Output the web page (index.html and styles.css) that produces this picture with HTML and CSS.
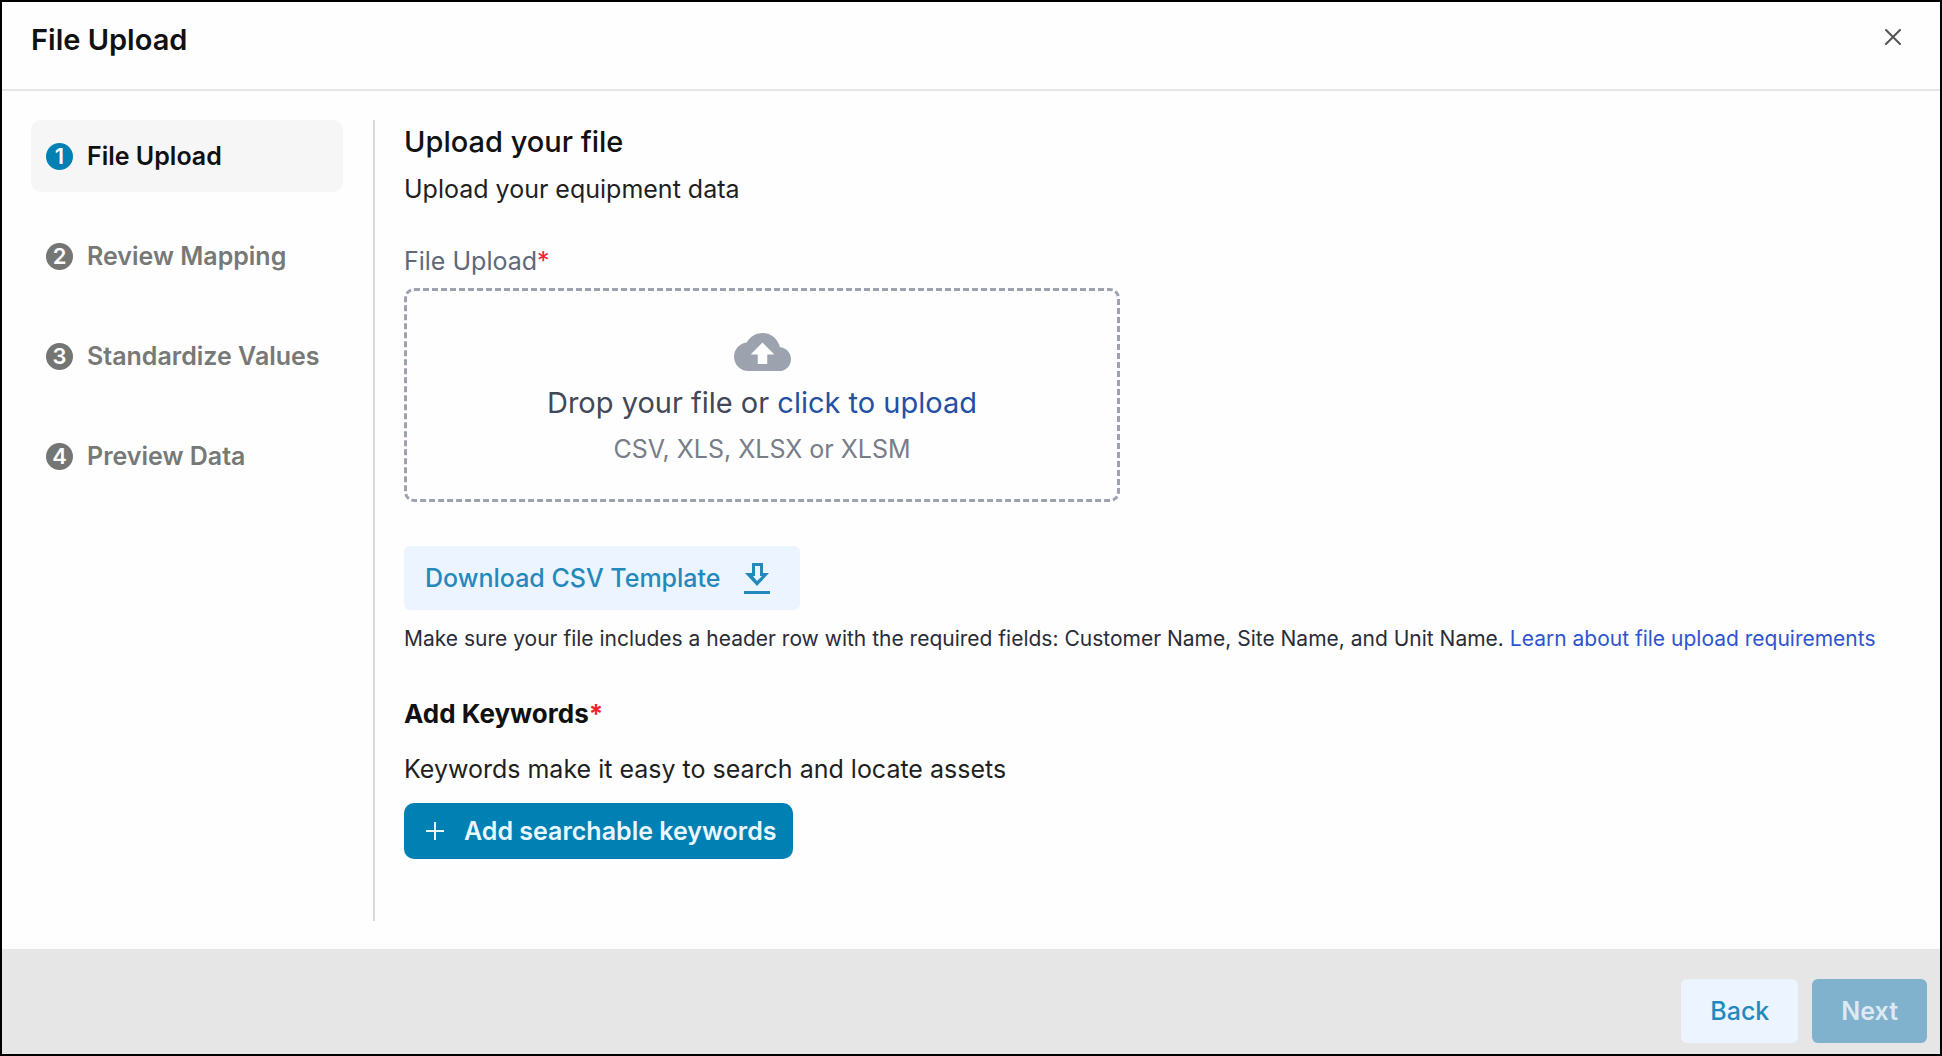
FILE: index.html
```html
<!DOCTYPE html>
<html lang="en">
<head>
    <meta charset="UTF-8">
    <meta name="viewport" content="width=device-width, initial-scale=1.0">
    <title>File Upload</title>
    <link rel="stylesheet" href="styles.css">
</head>
<body>
    <div class="modal">
        <header class="modal-header">
            <h1>File Upload</h1>
            <button type="button" class="close" aria-label="Close">
                <svg viewBox="0 0 16 16" width="16" height="16"><path d="M1 1l14 14M15 1L1 15" stroke="currentColor" stroke-width="2" stroke-linecap="round"/></svg>
            </button>
        </header>

        <div class="modal-body">
            <ol class="steps">
                <li class="step active"><span class="step-number">1</span>File Upload</li>
                <li class="step"><span class="step-number">2</span>Review Mapping</li>
                <li class="step"><span class="step-number">3</span>Standardize Values</li>
                <li class="step"><span class="step-number">4</span>Preview Data</li>
            </ol>

            <main class="content">
                <h2>Upload your file</h2>
                <p class="text">Upload your equipment data</p>

                <label class="field-label" for="file">File Upload<span class="required">*</span></label>
                <label class="dropzone">
                    <input type="file" id="file" class="file-input" accept=".csv,.xls,.xlsx,.xlsm">
                    <svg class="cloud" viewBox="0 4 24 16" width="57" height="38"><path fill="currentColor" d="M19.35 10.04C18.67 6.59 15.64 4 12 4 9.11 4 6.6 5.64 5.35 8.04 2.34 8.36 0 10.91 0 14c0 3.31 2.69 6 6 6h13c2.76 0 5-2.24 5-5 0-2.64-2.05-4.78-4.65-4.96zM14 13v4h-4v-4H7l5-5 5 5h-3z"/></svg>
                    <span class="drop-text">Drop your file or <span class="drop-link">click to upload</span></span>
                    <span class="drop-hint">CSV, XLS, XLSX or XLSM</span>
                </label>

                <button type="button" class="btn btn-light btn-download">
                    Download CSV Template
                    <svg viewBox="0 0 26 31" width="26" height="31"><path fill="currentColor" fill-rule="evenodd" d="M8 0h11v10h6L13 23 1 10h7zM11 3v10H9l4 5 5-5h-2V3z"/><path fill="currentColor" d="M0 28h26v3H0z"/></svg>
                </button>
                <p class="note">Make sure your file includes a header row with the required fields: Customer Name, Site Name, and Unit Name. <a href="#">Learn about file upload requirements</a></p>

                <h3>Add Keywords<span class="required">*</span></h3>
                <p class="text">Keywords make it easy to search and locate assets</p>
                <button type="button" class="btn btn-primary btn-keywords">
                    <svg viewBox="0 0 18 18" width="18" height="18"><path d="M9 0v18M0 9h18" stroke="currentColor" stroke-width="2"/></svg>
                    Add searchable keywords
                </button>
            </main>
        </div>

        <footer class="modal-footer">
            <button type="button" class="btn btn-light">Back</button>
            <button type="button" class="btn btn-primary" disabled>Next</button>
        </footer>
    </div>
</body>
</html>
```
FILE: styles.css
```css
* {
    margin: 0;
    padding: 0;
    box-sizing: border-box;
}

body {
    font-family: Inter, 'Liberation Sans', sans-serif;
    font-size: 25px;
    line-height: 32px;
    color: #1f1f1f;
    background: #fefefe;
}

button {
    font: inherit;
    border: none;
    cursor: pointer;
}

a {
    color: #2f54d0;
    text-decoration: none;
}

svg {
    display: block;
    fill: none;
}

.modal {
    display: flex;
    flex-direction: column;
    min-height: 100vh;
    border: 2px solid #000;
}

.modal-header {
    display: flex;
    justify-content: space-between;
    align-items: flex-start;
    padding: 20px 33px 31px 29px;
    border-bottom: 2px solid #e6e6e6;
}

h1 {
    font-size: 29px;
    line-height: 36px;
    font-weight: 600;
    color: #111;
}

.close {
    padding: 7px 6px;
    color: #555;
    background: none;
}

.modal-body {
    flex: 1;
    display: flex;
    gap: 29px;
    padding: 29px 29px 28px;
}

.steps {
    display: flex;
    flex-direction: column;
    gap: 28px;
    flex-shrink: 0;
    width: 344px;
    padding-right: 30px;
    border-right: 2px solid #d9d9d9;
    list-style: none;
}

.step {
    display: flex;
    align-items: center;
    gap: 14px;
    padding: 20px 15px;
    border-radius: 10px;
    font-weight: 600;
    color: #777977;
}

.step.active {
    color: #111;
    background: #f6f6f6;
}

.step-number {
    width: 27px;
    height: 27px;
    border-radius: 50%;
    background: #747673;
    color: #fff;
    font-size: 22px;
    line-height: 27px;
    text-align: center;
}

.active .step-number {
    background: #0080b3;
}

.content {
    flex: 1;
    display: flex;
    flex-direction: column;
    align-items: flex-start;
}

h2 {
    margin-top: 4px;
    margin-bottom: 13px;
    font-size: 29px;
    line-height: 36px;
    font-weight: 500;
    color: #111;
}

h3 {
    margin-top: 43px;
    margin-bottom: 23px;
    font-size: 26px;
    font-weight: 700;
    color: #111;
}

.field-label {
    margin-top: 40px;
    margin-bottom: 11px;
    color: #606977;
}

.required {
    color: #f5222d;
}

.dropzone {
    display: flex;
    flex-direction: column;
    align-items: center;
    width: 100%;
    max-width: 716px;
    padding: 42px 20px 34px;
    border: 3px dashed #9ca3af;
    border-radius: 10px;
    cursor: pointer;
}

.file-input {
    position: absolute;
    width: 1px;
    height: 1px;
    opacity: 0;
}

.cloud {
    color: #9ca3af;
}

.drop-text {
    margin-top: 14px;
    margin-bottom: 12px;
    font-size: 29px;
    line-height: 36px;
    color: #414856;
}

.drop-link {
    color: #2350a5;
}

.drop-hint {
    color: #777d89;
}

.btn {
    display: flex;
    align-items: center;
    border-radius: 6px;
    padding: 16px 29px;
    font-weight: 500;
}

.btn-light {
    color: #2389bd;
    background: #ecf5ff;
}

.btn-primary {
    color: #e9f7ff;
    background: #0080b3;
    font-weight: 600;
}

.btn:disabled {
    color: #dceaf3;
    background: #80b1cd;
}

.btn-download {
    gap: 24px;
    margin-top: 44px;
    padding: 16px 30px 16px 21px;
}

.btn-keywords {
    gap: 20px;
    margin-top: 18px;
    padding: 12px 16px 12px 22px;
    border-radius: 10px;
}

.note {
    margin-top: 13px;
    font-size: 21px;
    color: #2a2c36;
}

.modal-footer {
    display: flex;
    justify-content: flex-end;
    gap: 14px;
    padding: 30px 13px 11px;
    background: #e6e6e6;
}
```
